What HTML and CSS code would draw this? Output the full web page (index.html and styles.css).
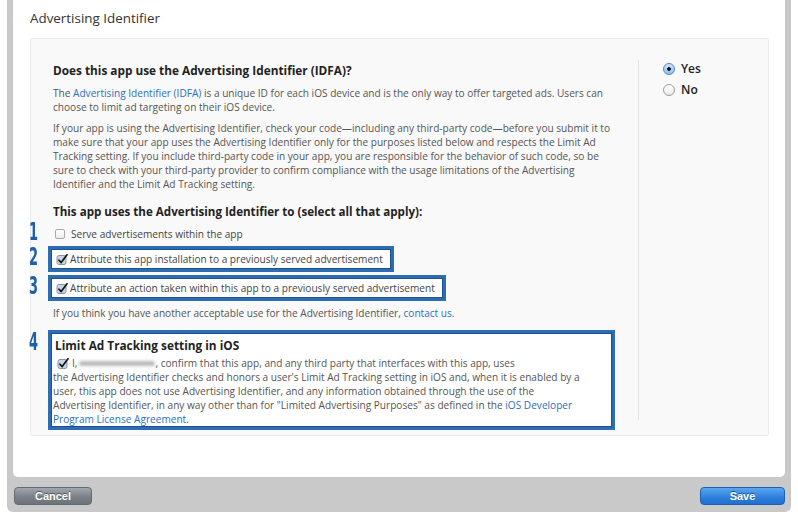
FILE: index.html
```
<!DOCTYPE html>
<html>
<head>
<meta charset="utf-8">
<link rel="stylesheet" href="styles.css">
</head>
<body>
<div class="frame">
  <div class="panel">
    <h1 class="title">Advertising Identifier</h1>
    <div class="qbox">
      <div class="main">
        <h2 class="q">Does this app use the Advertising Identifier (IDFA)?</h2>
        <p class="txt">The <a class="lnk">Advertising Identifier (IDFA)</a> is a unique ID for each iOS device and is the only way to offer targeted ads. Users can choose to limit ad targeting on their iOS device.</p>
        <p class="txt gap">If your app is using the Advertising Identifier, check your code—including any third-party code—before you submit it to make sure that your app uses the Advertising Identifier only for the purposes listed below and respects the Limit Ad Tracking setting. If you include third-party code in your app, you are responsible for the behavior of such code, so be sure to check with your third-party provider to confirm compliance with the usage limitations of the Advertising Identifier and the Limit Ad Tracking setting.</p>
        <h3 class="sub">This app uses the Advertising Identifier to (select all that apply):</h3>
        <div class="item first">
          <span class="num n1">1</span>
          <label class="opt"><span class="cb"></span>Serve advertisements within the app</label>
        </div>
        <div class="item i2">
          <span class="num n2">2</span>
          <label class="opt boxed"><svg class="cbc" viewBox="0 0 12 12" width="12" height="12"><rect x="1" y="2.5" width="9" height="9" rx="2" fill="#c9d3e2" stroke="#8796ab" stroke-width="1"/><path d="M3 7.2 L5.2 9.6 L11 1.8" fill="none" stroke="#111" stroke-width="1.7" stroke-linecap="round" stroke-linejoin="round"/></svg>Attribute this app installation to a previously served advertisement</label>
        </div>
        <div class="item i3">
          <span class="num n3">3</span>
          <label class="opt boxed"><svg class="cbc" viewBox="0 0 12 12" width="12" height="12"><rect x="1" y="2.5" width="9" height="9" rx="2" fill="#c9d3e2" stroke="#8796ab" stroke-width="1"/><path d="M3 7.2 L5.2 9.6 L11 1.8" fill="none" stroke="#111" stroke-width="1.7" stroke-linecap="round" stroke-linejoin="round"/></svg>Attribute an action taken within this app to a previously served advertisement</label>
        </div>
        <p class="txt other">If you think you have another acceptable use for the Advertising Identifier, <a class="lnk">contact us.</a></p>
        <div class="item i4">
          <span class="num n4">4</span>
          <div class="limit">
            <h3 class="lh">Limit Ad Tracking setting in iOS</h3>
            <p class="txt conf"><svg class="cbc" viewBox="0 0 12 12" width="12" height="12"><rect x="1" y="2.5" width="9" height="9" rx="2" fill="#c9d3e2" stroke="#8796ab" stroke-width="1"/><path d="M3 7.2 L5.2 9.6 L11 1.8" fill="none" stroke="#111" stroke-width="1.7" stroke-linecap="round" stroke-linejoin="round"/></svg>I,<span class="blur"></span>, confirm that this app, and any third party that interfaces with this app, uses<br>the Advertising Identifier checks and honors a user's Limit Ad Tracking setting in iOS and, when it is enabled by a<br>user, this app does not use Advertising Identifier, and any information obtained through the use of the<br>Advertising Identifier, in any way other than for "Limited Advertising Purposes" as defined in the <a class="lnk">iOS Developer<br>Program License Agreement</a>.</p>
          </div>
        </div>
      </div>
      <div class="side">
        <label class="radio"><span class="rb on"></span>Yes</label>
        <label class="radio"><span class="rb"></span>No</label>
      </div>
    </div>
  </div>
  <div class="footer">
    <button class="btn cancel">Cancel</button>
    <button class="btn save">Save</button>
  </div>
</div>
</body>
</html>
```
FILE: styles.css
```
* { box-sizing: border-box; }
body {
  margin: 0;
  background: #fff;
  font-family: "Open Sans", "DejaVu Sans", sans-serif;
  color: #555;
}
.frame {
  margin-left: 7px;
  width: 784px;
  height: 512px;
  background: #c9c9c9;
  border-radius: 0 0 6px 6px;
  padding: 0 6px;
}
.panel {
  height: 477px;
  background: #fff;
  border-radius: 0 0 5px 5px;
  padding: 8px 16px 0 17px;
}
.title {
  margin: 0;
  font-size: 13.4px;
  line-height: 20px;
  font-weight: normal;
  color: #333;
}
.qbox {
  margin-top: 10px;
  height: 398px;
  background: #f9f9f9;
  border: 1px solid #ececec;
  border-radius: 2px;
  display: flex;
}
.main {
  flex: 0 0 607px;
  padding: 23px 0 0 22px;
}
.q {
  margin: 0;
  font-size: 11.8px;
  line-height: 16px;
  font-weight: bold;
  color: #222;
}
.txt {
  margin: 8px 0 0;
  width: 563px;
  font-size: 10.1px;
  line-height: 14px;
  color: #555;
}
.txt.gap { margin-top: 7px; }
.lnk { color: #2f6fc0; text-decoration: none; }
.sub {
  margin: 13px 0 0;
  font-size: 11.6px;
  line-height: 16px;
  font-weight: bold;
  color: #222;
}
.item { position: relative; }
.item.first { margin-top: 7px; }
.item.i2 { margin-top: 5px; }
.item.i3 { margin-top: 3px; }
.item.i4 { margin-top: 10px; }
.num {
  position: absolute;
  left: -24px;
  font-family: "DejaVu Sans Condensed", "DejaVu Sans", sans-serif;
  font-weight: bold;
  font-size: 24px;
  line-height: 24px;
  color: #1e5fab;
  transform: scaleX(0.6);
  transform-origin: left top;
}
.n1 { top: -7px; }
.n2 { top: -1px; }
.n3 { top: -1px; }
.n4 { top: 0; }
.opt {
  display: flex;
  align-items: center;
  height: 14px;
  font-size: 10.1px;
  line-height: 14px;
  color: #444;
  white-space: nowrap;
}
.cb {
  width: 10px;
  height: 10px;
  margin: 0 6px 0 2px;
  border: 1px solid #a9a9a9;
  border-radius: 2px;
  background: linear-gradient(#fff, #eee);
}
.boxed {
  display: inline-flex;
  height: 26px;
  margin-left: -5px;
  padding: 0 8px 0 5px;
  background: #fff;
  border: 3px solid #2f6db3;
  box-shadow: inset 0 0 0 1px #1c508e;
}
.cbc { flex: none; margin-right: 2px; }
.other { margin-top: 5px; }
.limit {
  margin-left: -5px;
  width: 567px;
  height: 100px;
  background: #fff;
  border: 3px solid #2f6db3;
  box-shadow: inset 0 0 0 1px #1c508e;
  padding: 4px 0 0 2px;
}
.lh {
  margin: 0 0 0 2px;
  font-size: 11.8px;
  line-height: 16px;
  font-weight: bold;
  color: #222;
}
.conf {
  margin: 3px 0 0;
  width: auto;
  white-space: nowrap;
}
.conf .cbc { vertical-align: -2px; margin: 0 3px 0 4px; }
.blur {
  display: inline-block;
  width: 76px;
  height: 5px;
  margin: 0 0 1px 2px;
  background: #b9b9b9;
  border-radius: 3px;
  filter: blur(1.5px);
}
.side {
  flex: 1;
  margin: 21px 0 15px;
  border-left: 1px solid #e3e3e3;
  padding-left: 24px;
  display: flex;
  flex-direction: column;
  gap: 4px;
}
.radio {
  display: flex;
  align-items: center;
  height: 17px;
  font-size: 12px;
  font-weight: 600;
  color: #222;
}
.rb {
  width: 12px;
  height: 12px;
  margin-right: 6px;
  border-radius: 50%;
  border: 1px solid #9a9a9a;
  background: linear-gradient(#fff, #e9e9e9);
}
.rb.on {
  border-color: #4f86c9;
  background: radial-gradient(circle, #1a1a1a 0 1.6px, transparent 2.1px), linear-gradient(#d3e6fb, #8cbcef);
}
.footer {
  height: 35px;
  padding: 10px 0 0 1px;
  display: flex;
  justify-content: space-between;
}
.btn {
  height: 18px;
  border-radius: 4px;
  font-family: "Liberation Sans", Arial, sans-serif;
  font-size: 11px;
  font-weight: bold;
  color: #fff;
  padding: 0;
  cursor: pointer;
}
.cancel {
  width: 78px;
  border: 1px solid #626971;
  background: linear-gradient(#a1a7ae, #7a8189 55%, #6c737b);
  text-shadow: 0 -1px 0 #555;
}
.save {
  width: 85px;
  border: 1px solid #1b60b5;
  background: linear-gradient(#5aa8f0, #2f81dc 55%, #1f6ed0);
  text-shadow: 0 -1px 0 #1a4f8f;
}
```
